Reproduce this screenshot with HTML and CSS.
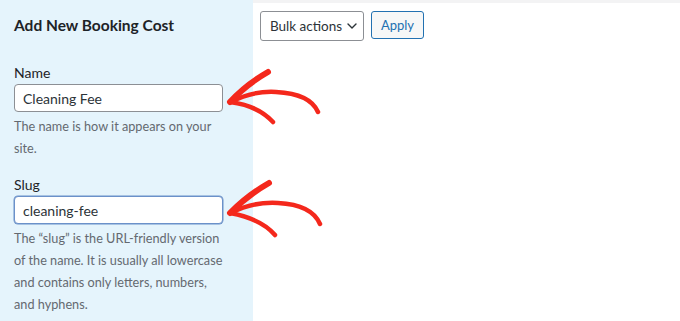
FILE: index.html
```html
<!DOCTYPE html>
<html lang="en">
<head>
<meta charset="UTF-8">
<meta name="viewport" content="width=device-width, initial-scale=1.0">
<title>Booking Costs</title>
<link rel="stylesheet" href="styles.css">
</head>
<body>

<div class="page">
    <aside class="addPanel">
        <h2>Add New Booking Cost</h2>

        <div class="field field-name">
            <label for="costName">Name</label>
            <input type="text" id="costName" value="Cleaning Fee">
            <p class="help">The name is how it appears on your site.</p>
        </div>

        <div class="field field-slug">
            <label for="costSlug">Slug</label>
            <input type="text" id="costSlug" class="focused" value="cleaning-fee">
            <p class="help">The &ldquo;slug&rdquo; is the URL-friendly version of the name. It is usually all lowercase and contains only letters, numbers, and hyphens.</p>
        </div>
    </aside>

    <main class="listArea">
        <div class="tablenav">
            <div class="bulkSelect">
                <span>Bulk actions</span>
                <svg width="10" height="6" viewBox="0 0 10 6"><path d="M1 1l4 4 4-4" fill="none" stroke="#2c3338" stroke-width="1.4" stroke-linecap="round" stroke-linejoin="round"/></svg>
            </div>
            <button type="button" class="applyBtn">Apply</button>
        </div>
    </main>

    <!-- setas de anotação -->
    <svg class="arrows" width="680" height="321" viewBox="0 0 680 321">
        <g fill="none" stroke="#f4281c" stroke-linecap="round" stroke-linejoin="round">
            <path d="M318 112 C312 98 296 93 276 92 C258 91 244 95 231 102" stroke-width="4.5"/>
            <path d="M268 72 C254 80 240 91 230 102" stroke-width="6"/>
            <path d="M230 102 C246 104 262 110 273 122" stroke-width="4.5"/>

            <path d="M320 224 C314 210 298 204 278 203 C260 202 244 206 231 213" stroke-width="4.5"/>
            <path d="M269 183 C255 191 241 202 230 213" stroke-width="6"/>
            <path d="M230 213 C246 216 264 222 275 235" stroke-width="4.5"/>
        </g>
    </svg>
</div>

</body>
</html>
```

FILE: styles.css
```css
body {
    margin: 0;
    font-family: Lato, "Noto Sans", sans-serif;
    color: #1d2327;
    background-color: #fff;
}

.page {
    position: relative;
    display: flex;
    width: 680px;
    height: 321px;
    overflow: hidden;
}

.addPanel {
    width: 253px;
    flex-shrink: 0;
    background-color: #e5f4fc;
    padding: 15px 0 0 14px;
    box-sizing: border-box;
}

.addPanel h2 {
    margin: 0;
    font-size: 15.5px;
    line-height: 20px;
    font-weight: 700;
    color: #1d2327;
}

.field label {
    display: block;
    font-size: 14px;
    line-height: 20px;
    color: #1d2327;
}

.field-name {
    margin-top: 28px;
}

.field-slug {
    margin-top: 16px;
}

.field input {
    display: block;
    width: 209px;
    height: 28px;
    margin-top: 1px;
    padding: 0 8px;
    box-sizing: border-box;
    border: 1px solid #8c8f94;
    border-radius: 4px;
    background-color: #fff;
    font-family: inherit;
    font-size: 14px;
    color: #2c3338;
}

.field input.focused {
    border-color: #6b91c9;
    box-shadow: 0 0 0 0.5px #6b91c9;
}

.help {
    margin: 3px 0 0;
    width: 212px;
    font-size: 12.7px;
    line-height: 22px;
    color: #646970;
}

.listArea {
    flex: 1;
    border-top: 3px solid #f3f3f4;
    padding: 8px 0 0 7px;
}

.tablenav {
    display: flex;
    align-items: flex-start;
    gap: 7px;
}

.bulkSelect {
    display: flex;
    align-items: center;
    justify-content: space-between;
    width: 104px;
    height: 30px;
    padding: 0 6px 0 9px;
    box-sizing: border-box;
    border: 1px solid #8c8f94;
    border-radius: 3px;
    font-size: 13.5px;
    color: #2c3338;
}

.applyBtn {
    width: 53px;
    height: 28px;
    padding: 0;
    border: 1px solid #2271b1;
    border-radius: 3px;
    background-color: #f6f7f7;
    font-family: inherit;
    font-size: 13px;
    color: #2271b1;
}

.arrows {
    position: absolute;
    top: 0;
    left: 0;
    pointer-events: none;
}
```
